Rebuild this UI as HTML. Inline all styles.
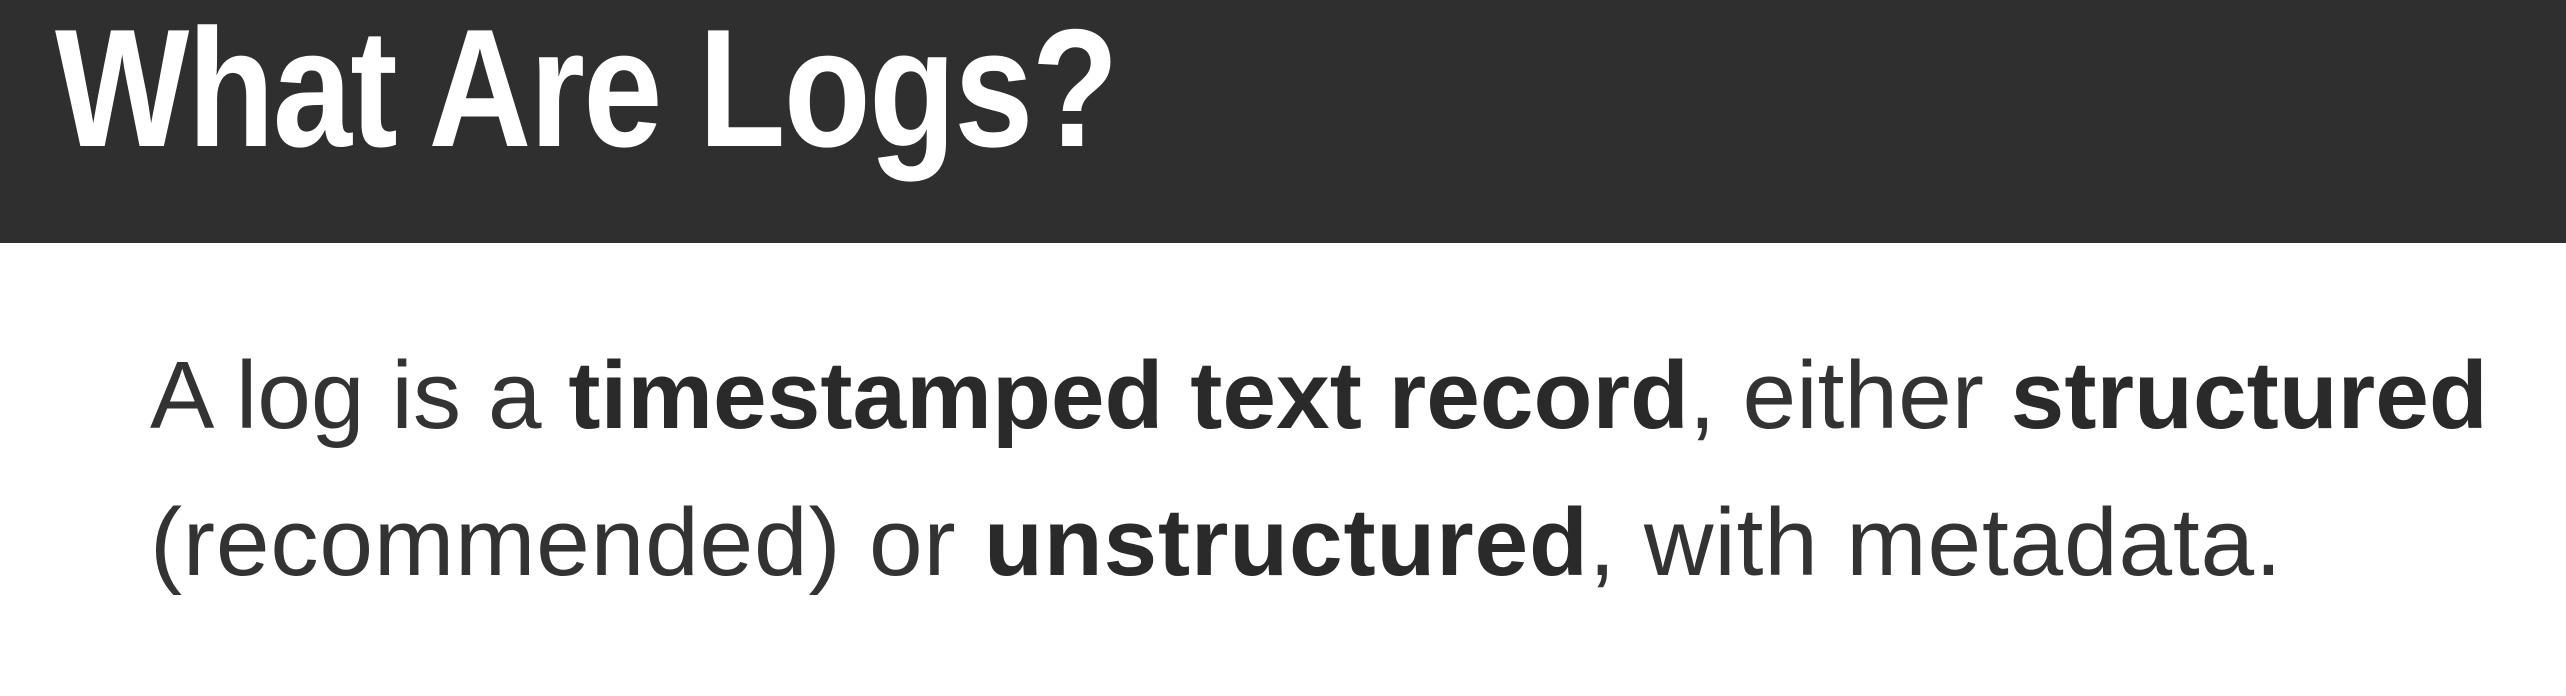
<!DOCTYPE html>
<html><head><style>
html,body{margin:0;padding:0;width:2566px;height:696px;overflow:hidden;background:#fff;font-family:"Liberation Sans",sans-serif}
.band{position:absolute;left:0;top:0;width:2566px;height:243px;background:#2f2f2f}
.title{position:absolute;left:55px;top:-12px;font-size:168px;font-weight:bold;color:#fff;white-space:nowrap;letter-spacing:-2px;line-height:200px;transform-origin:0 0;transform:scaleX(0.847)}
.body{position:absolute;left:150px;top:322px;font-size:96px;color:#333;white-space:nowrap;line-height:147px;transform-origin:0 0;transform:scaleX(1.005)}
.l2{letter-spacing:0.8px}
b{color:#2a2a2a}
</style></head><body>
<div class="band"></div>
<div class="title">What Are Logs?</div>
<div class="body">A log is a <b>timestamped text record</b>, either <b>structured</b><br><span class="l2">(recommended) or <b>unstructured</b>, with metadata.</span></div>
</body></html>
